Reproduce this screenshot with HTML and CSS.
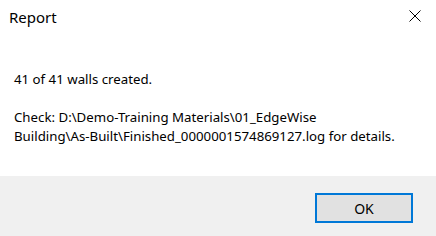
FILE: index.html
```html
<!DOCTYPE html>
<html>
<head>
<meta charset="utf-8">
<link rel="stylesheet" href="styles.css">
</head>
<body>
<div class="dialog">
  <div class="titlebar">
    <span class="title">Report</span>
    <span class="close" aria-label="Close">
      <svg width="12" height="12" viewBox="0 0 12 12"><path d="M0.5 0.5 L11.5 11.5 M11.5 0.5 L0.5 11.5" stroke="#000" stroke-width="1" fill="none"/></svg>
    </span>
  </div>
  <div class="content">
    <p class="msg">41 of 41 walls created.</p>
    <p class="msg">Check: D:\Demo-Training Materials\01_EdgeWise<br>Building\As-Built\Finished_0000001574869127.log for details.</p>
  </div>
  <div class="footer">
    <button class="ok">OK</button>
  </div>
</div>
</body>
</html>
```
FILE: styles.css
```css
html, body {
  margin: 0;
  padding: 0;
  background: #ffffff;
}
.dialog {
  width: 436px;
  height: 236px;
  display: flex;
  flex-direction: column;
  font-family: "Noto Sans", "Open Sans", sans-serif;
  color: #000;
}
.titlebar {
  height: 31px;
  display: flex;
  align-items: center;
  justify-content: space-between;
  padding-left: 9px;
  padding-right: 15px;
}
.title {
  font-size: 15px;
  line-height: 20px;
  padding-top: 3px;
}
.close {
  display: flex;
  width: 12px;
  height: 12px;
  margin-top: 1px;
}
.content {
  flex: 1;
  padding: 39px 14px 0 14px;
  box-sizing: border-box;
}
.msg {
  margin: 0 0 19px 0;
  font-size: 13.25px;
  line-height: 19px;
  color: #000;
}
.footer {
  height: 60px;
  background: #f0f0f0;
  display: flex;
  justify-content: flex-end;
  align-items: flex-start;
  padding: 17px 23px 0 0;
  box-sizing: border-box;
}
.ok {
  width: 98px;
  height: 30px;
  border: 2px solid #0078d7;
  background: #e1e1e1;
  font-family: inherit;
  font-size: 14px;
  color: #000;
  padding: 0;
}
```
